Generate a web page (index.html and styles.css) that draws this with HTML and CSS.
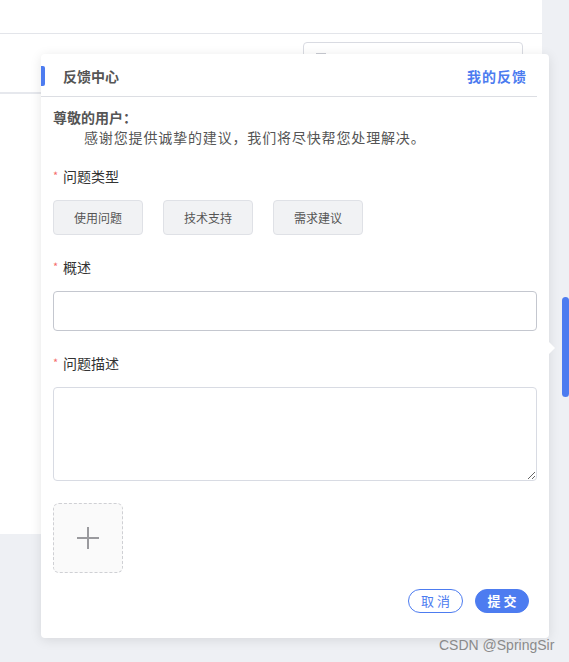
FILE: index.html
```html
<!DOCTYPE html>
<html lang="zh-CN">
<head>
<meta charset="utf-8">
<title>反馈中心</title>
<link rel="stylesheet" href="styles.css">
</head>
<body>
<div class="app">
  <div class="topbar"></div>
  <div class="toolbar">
    <div class="search"><span class="search-icon"></span></div>
  </div>
</div>
<div class="scroll-thumb"></div>

<div class="popover">
  <div class="pop-header">
    <span class="pop-bar"></span>
    <span class="pop-title">反馈中心</span>
    <a class="pop-link">我的反馈</a>
  </div>
  <div class="pop-body">
    <div class="greet">
      <div class="greet-title">尊敬的用户：</div>
      <div class="greet-text">感谢您提供诚挚的建议，我们将尽快帮您处理解决。</div>
    </div>

    <div class="label label-type"><span class="star">*</span>问题类型</div>
    <div class="types">
      <button class="type-btn">使用问题</button>
      <button class="type-btn">技术支持</button>
      <button class="type-btn">需求建议</button>
    </div>

    <div class="label label-summary"><span class="star">*</span>概述</div>
    <input class="field" type="text">

    <div class="label label-desc"><span class="star">*</span>问题描述</div>
    <textarea class="area"></textarea>

    <div class="upload">
      <svg width="24" height="24" viewBox="0 0 24 24"><path d="M12 1v22M1 12h22" stroke="#9a9a9e" stroke-width="2" fill="none"/></svg>
    </div>

    <div class="actions">
      <button class="btn btn-ghost">取 消</button>
      <button class="btn btn-primary">提 交</button>
    </div>
  </div>
  <span class="pop-arrow"></span>
</div>

<div class="credit">CSDN @SpringSir</div>
</body>
</html>
```

FILE: styles.css
```css
* { box-sizing: border-box; }
html, body { margin: 0; padding: 0; }
body {
  width: 569px;
  height: 662px;
  overflow: hidden;
  background: #eef0f4;
  font-family: "Noto Sans CJK SC", "Noto Sans", sans-serif;
  position: relative;
}
.app {
  width: 542px;
  height: 534px;
  background: #fff;
}
.topbar {
  height: 34px;
  border-bottom: 1px solid #e3e5ea;
}
.toolbar {
  height: 60px;
  border-bottom: 2px solid #e6e8ed;
  padding: 8px 0 0 303px;
}
.search {
  width: 220px;
  height: 40px;
  border: 1px solid #d9dbe2;
  border-radius: 4px;
  padding: 10px 0 0 12px;
}
.search-icon {
  display: block;
  width: 10px;
  height: 3px;
  background: #c9cbd2;
}
.scroll-thumb {
  position: absolute;
  left: 562px;
  top: 297px;
  width: 7px;
  height: 100px;
  border-radius: 4px;
  background: #4d7cf0;
}
.popover {
  position: absolute;
  left: 41px;
  top: 54px;
  width: 508px;
  height: 584px;
  background: #fff;
  border-radius: 4px;
  box-shadow: 0 2px 12px rgba(0, 0, 0, 0.10);
}
.pop-arrow {
  position: absolute;
  right: -6px;
  top: 288px;
  width: 0;
  height: 0;
  border-top: 6px solid transparent;
  border-bottom: 6px solid transparent;
  border-left: 6px solid #fff;
}
.pop-header {
  height: 43px;
  margin-right: 12px;
  border-bottom: 1px solid #dcdee3;
  display: flex;
  align-items: center;
  padding-top: 2px;
}
.pop-bar {
  width: 4px;
  height: 20px;
  background: #4d7cf0;
  border-radius: 0 2px 2px 0;
}
.pop-title {
  margin-left: 18px;
  font-size: 14px;
  font-weight: 700;
  color: #555;
  line-height: 20px;
}
.pop-link {
  margin-left: auto;
  margin-right: 10px;
  font-size: 14px;
  font-weight: 700;
  color: #4d7cf0;
  letter-spacing: 1px;
  line-height: 20px;
}
.pop-body {
  padding: 10px 12px 0 12px;
}
.greet {
  font-size: 14px;
  line-height: 20px;
  color: #555;
}
.greet-title {
  font-weight: 700;
}
.greet-text {
  padding-left: 31px;
  letter-spacing: 0.85px;
}
.label {
  font-size: 14px;
  line-height: 20px;
  color: #333;
  display: flex;
  align-items: center;
}
.label-type { margin-top: 19px; }
.label-summary { margin-top: 22px; }
.label-desc { margin-top: 22px; }
.star {
  color: #f56c6c;
  font-size: 11px;
  width: 10px;
  position: relative;
  top: -1px;
}
.types {
  display: flex;
  gap: 20px;
  margin-top: 14px;
}
.type-btn {
  width: 90px;
  height: 35px;
  border: 1px solid #dfe1e6;
  border-radius: 4px;
  background: #f1f2f4;
  color: #555;
  font-family: inherit;
  font-size: 12px;
  padding: 0;
}
.field {
  display: block;
  width: 484px;
  height: 40px;
  margin-top: 14px;
  border: 1px solid #c4c7cf;
  border-radius: 4px;
  outline: none;
  background: #fff;
}
.area {
  display: block;
  width: 484px;
  height: 94px;
  margin: 14px 0 0 0;
  border: 1px solid #d8dbe3;
  border-radius: 4px;
  outline: none;
  resize: vertical;
  font-family: inherit;
}
.upload {
  width: 70px;
  height: 70px;
  margin-top: 22px;
  border: 1px dashed #cfd0d4;
  border-radius: 6px;
  background: #fafafa;
  display: flex;
  align-items: center;
  justify-content: center;
}
.actions {
  display: flex;
  justify-content: flex-end;
  gap: 12px;
  margin-top: 16px;
  padding-right: 8px;
}
.btn {
  height: 24px;
  padding: 0;
  border-radius: 12px;
  font-family: inherit;
  font-size: 13px;
  line-height: 22px;
}
.btn-ghost {
  width: 55px;
  border: 1px solid #4d7cf0;
  background: #fff;
  color: #4d7cf0;
}
.btn-primary {
  width: 54px;
  border: 1px solid #4d7cf0;
  background: #4d7cf0;
  color: #fff;
  font-weight: 700;
}
.credit {
  position: absolute;
  left: 439px;
  top: 636px;
  font-family: "Liberation Sans", Arial, sans-serif;
  font-size: 14px;
  color: #8a8a8a;
  line-height: 18px;
}
```
